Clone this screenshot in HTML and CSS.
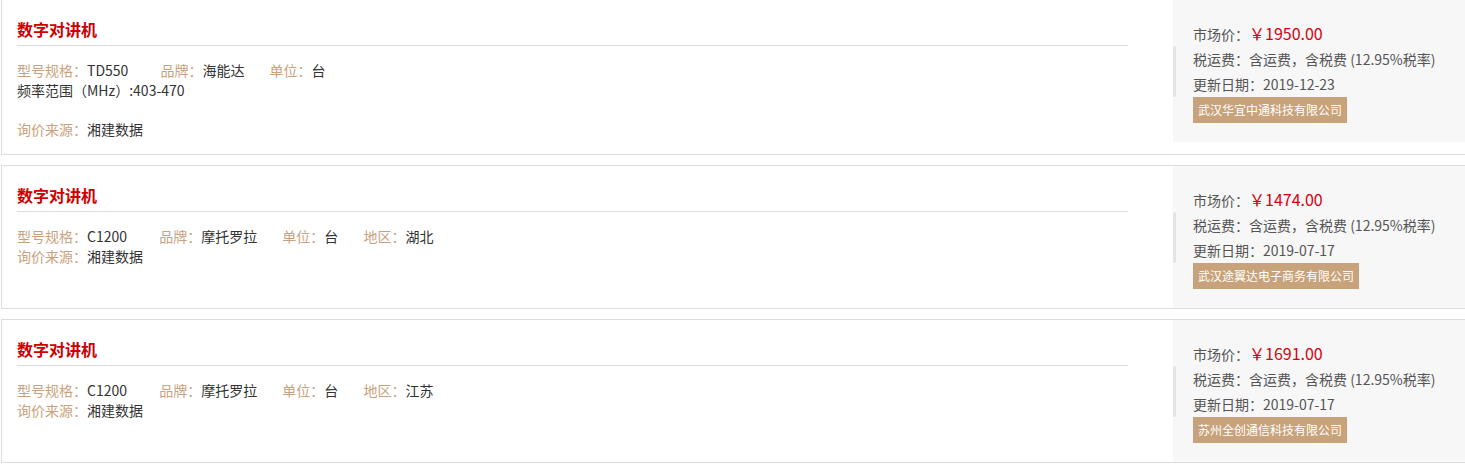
FILE: index.html
```html
<!DOCTYPE html>
<html lang="zh-CN">
<head>
    <meta charset="UTF-8">
    <meta name="viewport" content="width=device-width, initial-scale=1.0">
    <title>询价结果</title>
    <link rel="stylesheet" href="styles.css">
</head>
<body>
    <div class="price-list">
        <div class="price-item">
            <div class="item-info">
                <h3 class="item-title">数字对讲机</h3>
                <div class="item-row">
                    <span class="field model"><span class="label">型号规格：</span>TD550</span>
                    <span class="field"><span class="label">品牌：</span>海能达</span>
                    <span class="field"><span class="label">单位：</span>台</span>
                </div>
                <div class="item-row">频率范围（MHz）:403-470</div>
                <div class="item-row"></div>
                <div class="item-row">
                    <span class="field"><span class="label">询价来源：</span>湘建数据</span>
                </div>
            </div>
            <div class="item-price">
                <div class="scroll-bar"></div>
                <div class="price-detail">
                    <p>市场价：<span class="money">￥1950.00</span></p>
                    <p>税运费：含运费，含税费 (12.95%税率)</p>
                    <p>更新日期：2019-12-23</p>
                    <span class="company">武汉华宜中通科技有限公司</span>
                </div>
            </div>
        </div>

        <div class="price-item">
            <div class="item-info">
                <h3 class="item-title">数字对讲机</h3>
                <div class="item-row">
                    <span class="field model"><span class="label">型号规格：</span>C1200</span>
                    <span class="field"><span class="label">品牌：</span>摩托罗拉</span>
                    <span class="field"><span class="label">单位：</span>台</span>
                    <span class="field"><span class="label">地区：</span>湖北</span>
                </div>
                <div class="item-row">
                    <span class="field"><span class="label">询价来源：</span>湘建数据</span>
                </div>
            </div>
            <div class="item-price">
                <div class="scroll-bar"></div>
                <div class="price-detail">
                    <p>市场价：<span class="money">￥1474.00</span></p>
                    <p>税运费：含运费，含税费 (12.95%税率)</p>
                    <p>更新日期：2019-07-17</p>
                    <span class="company">武汉途翼达电子商务有限公司</span>
                </div>
            </div>
        </div>

        <div class="price-item">
            <div class="item-info">
                <h3 class="item-title">数字对讲机</h3>
                <div class="item-row">
                    <span class="field model"><span class="label">型号规格：</span>C1200</span>
                    <span class="field"><span class="label">品牌：</span>摩托罗拉</span>
                    <span class="field"><span class="label">单位：</span>台</span>
                    <span class="field"><span class="label">地区：</span>江苏</span>
                </div>
                <div class="item-row">
                    <span class="field"><span class="label">询价来源：</span>湘建数据</span>
                </div>
            </div>
            <div class="item-price">
                <div class="scroll-bar"></div>
                <div class="price-detail">
                    <p>市场价：<span class="money">￥1691.00</span></p>
                    <p>税运费：含运费，含税费 (12.95%税率)</p>
                    <p>更新日期：2019-07-17</p>
                    <span class="company">苏州全创通信科技有限公司</span>
                </div>
            </div>
        </div>
    </div>
</body>
</html>
```

FILE: styles.css
```css
body {
    margin: 0;
    overflow: hidden;
    font-family: "Noto Sans CJK SC", "Liberation Sans", sans-serif;
    font-size: 14px;
    color: #333;
    background: #fff;
}
.price-list {
    width: 1480px;
    margin: -1px 0 0 1px;
}
.price-item {
    display: flex;
    align-items: flex-start;
    border: 1px solid #ddd;
    margin-bottom: 10px;
}
.item-info {
    width: 1111px;
    padding: 19px 45px 15px 15px;
}
.item-title {
    margin: 0 0 15px;
    padding-bottom: 6px;
    border-bottom: 1px solid #ddd;
    font-size: 16px;
    line-height: 20px;
    font-weight: bold;
    color: #c00;
}
.item-row {
    line-height: 19.5px;
    min-height: 19.5px;
}
.field {
    margin-right: 22px;
}
.field.model {
    margin-right: 29px;
}
.label {
    color: #c9a27d;
}
.item-price {
    flex: 1;
    display: flex;
    height: 142px;
    background: #f7f7f7;
    color: #555;
}
.scroll-bar {
    width: 3px;
    height: 51px;
    margin-top: 46px;
    border-radius: 2px;
    background: #e4e4e4;
}
.price-detail {
    padding: 21px 0 0 17px;
}
.price-detail p {
    margin: 0;
    line-height: 25px;
}
.money {
    font-size: 16px;
    color: #d6000f;
}
.company {
    display: inline-block;
    padding: 0 5px;
    line-height: 26px;
    font-size: 12px;
    color: #fff;
    background: #c8a27a;
}
```
